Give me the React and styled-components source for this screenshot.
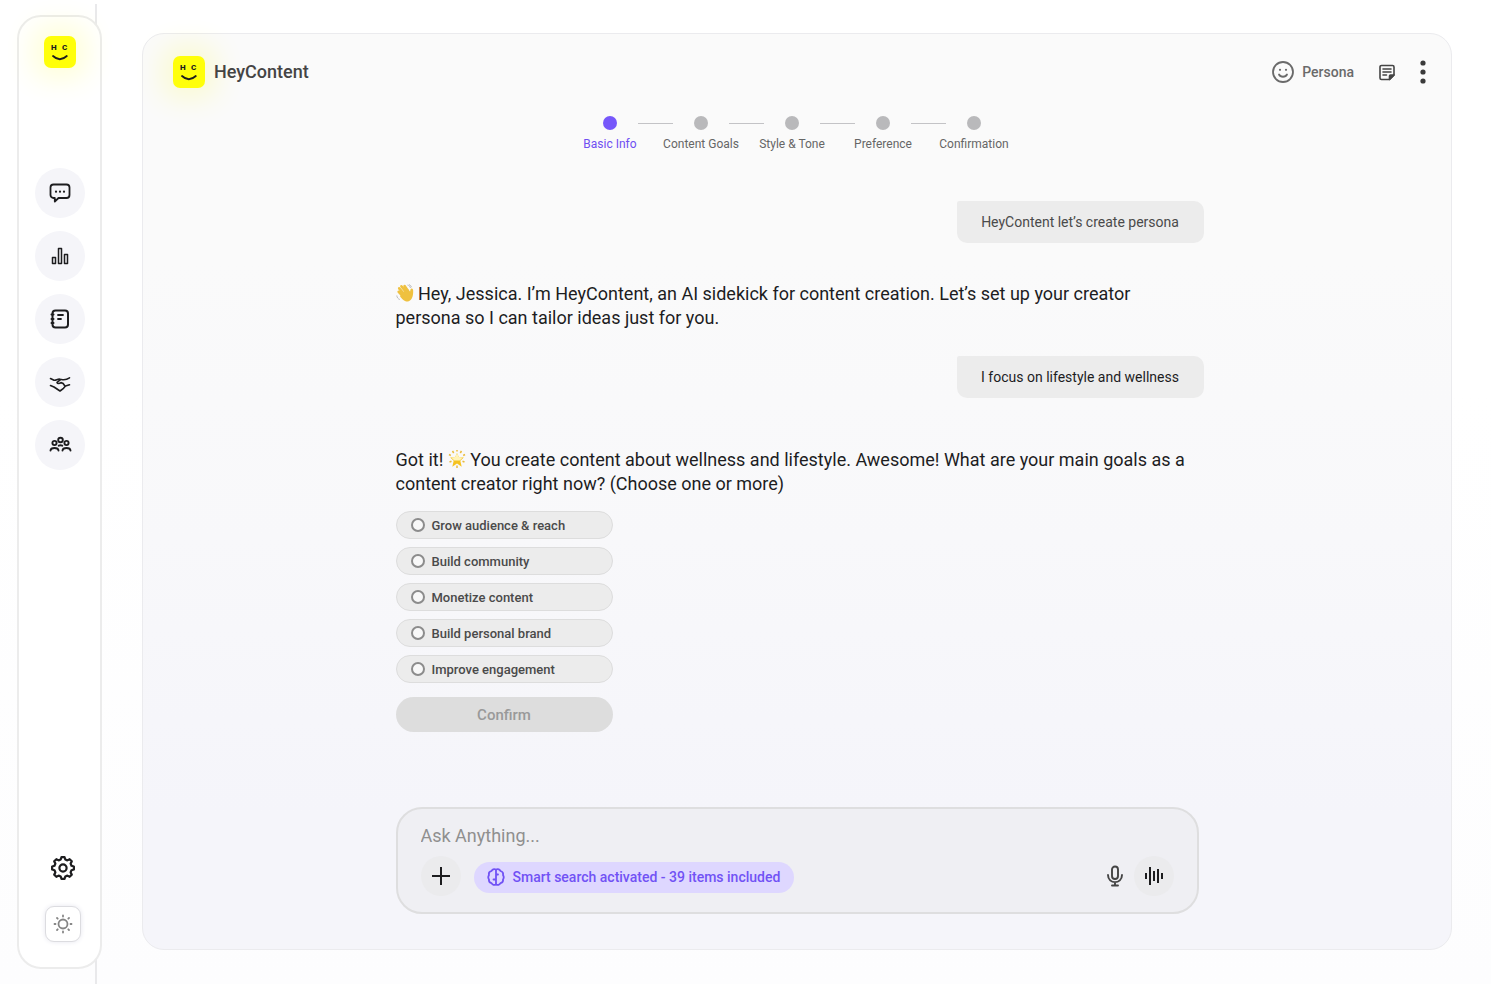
import React, { useState } from "react";
import styled, { createGlobalStyle } from "styled-components";

//........Global style...............
const GlobalStyle = createGlobalStyle`
  * {
    box-sizing: border-box;
  }
  body {
    margin: 0;
    background: #ffffff;
    font-family: Roboto, "Liberation Sans", sans-serif;
    color: #1d1d1f;
  }
  button, input {
    font-family: inherit;
  }
  button {
    border: 0;
    padding: 0;
    background: none;
    cursor: pointer;
  }
`;

//........Page...............
const Page = styled.div`
  position: relative;
  display: flex;
  gap: 40px;
  min-height: 100vh;
  padding: 15px 39px 15px 17px;
  background: linear-gradient(#ffffff 40%, #fdfdfe);

  &::before {
    content: "";
    position: absolute;
    left: 95px;
    top: 4px;
    bottom: 0;
    width: 2px;
    background: #e9e9eb;
  }
`;

//........Sidebar...............
const Sidebar = styled.aside`
  position: relative;
  flex: none;
  display: flex;
  flex-direction: column;
  align-items: center;
  width: 85px;
  padding: 19px 0 25px;
  border: 2px solid #ececec;
  border-radius: 24px;
  background: #ffffff;
`;
const Nav = styled.nav`
  display: flex;
  flex-direction: column;
  gap: 13px;
  margin: 100px 0 auto;
`;
const NavLink = styled.a`
  display: flex;
  align-items: center;
  justify-content: center;
  width: 50px;
  height: 50px;
  border-radius: 50%;
  background: #f5f5f9;
  color: #1d1d1f;
`;
const SidebarFooter = styled.div`
  display: flex;
  flex-direction: column;
  align-items: center;
  gap: 25px;
  padding-left: 6px;
`;
const IconButton = styled.button`
  display: flex;
  align-items: center;
  justify-content: center;
  width: ${(p) => p.$size}px;
  height: ${(p) => p.$size}px;
  color: ${(p) => p.$color || "#1d1d1f"};
`;
const ThemeButton = styled(IconButton)`
  border: 1px solid #dcdce0;
  border-radius: 9px;
  background: #ffffff;
  box-shadow: 0 0 5px #e6e6ee;
`;
const LogoTile = styled.svg`
  display: block;
  flex: none;
  width: 32px;
  height: 32px;
  border-radius: 7px;
  background: #ffff0a;
  box-shadow: 0 0 26px 12px rgba(255, 255, 60, 0.18);
`;

//........Panel...............
const Panel = styled.main`
  flex: 1;
  display: flex;
  flex-direction: column;
  margin: 18px 0 19px;
  padding: 22px 0 35px;
  border: 1px solid #ebebee;
  border-radius: 22px;
  background: linear-gradient(#fafafa 25%, #f8f8fa 55%, #f5f5fa 85%);
`;
const Header = styled.header`
  display: flex;
  align-items: center;
  height: 32px;
  padding: 0 16px 0 30px;
`;
const Title = styled.h1`
  margin: 0 auto 0 9px;
  font-size: 18px;
  font-weight: 500;
  line-height: 24px;
  color: #444444;
`;
const PersonaButton = styled.button`
  display: flex;
  align-items: center;
  gap: 7px;
  font-size: 14px;
  font-weight: 500;
  color: #6a6a6a;
`;
const HeaderActions = styled.div`
  display: flex;
  align-items: center;
  gap: 14px;
  margin-left: 23px;
`;

//........Steps...............
const Steps = styled.ol`
  display: grid;
  grid-template-columns: repeat(5, 91px);
  justify-content: center;
  margin: 28px 0 0;
  padding: 0 10px 0 0;
  list-style: none;
`;
const Step = styled.li`
  text-align: center;
  font-size: 12px;
  line-height: 16px;
  color: ${(p) => (p.$active ? "#6f4ff2" : "#666666")};
`;
const StepMarker = styled.div`
  display: grid;
  grid-template-columns: minmax(0, 1fr) 14px minmax(0, 1fr);
  align-items: center;
  margin-bottom: 6px;
`;
const StepDot = styled.span`
  grid-column: 2;
  height: 14px;
  border-radius: 50%;
  background: ${(p) => (p.$active ? "#7657fa" : "#b9b9bb")};
`;
const StepLine = styled.span`
  width: 35px;
  height: 1px;
  margin-left: 21px;
  background: #c3c3c6;
`;

//........Conversation...............
const Column = styled.div`
  flex: 1;
  display: flex;
  flex-direction: column;
  width: 100%;
  max-width: 813px;
  margin: 49px auto 0;
  padding-left: 5px;
`;
const Bubble = styled.p`
  align-self: flex-end;
  width: 247px;
  margin: 0;
  padding: 11px 0;
  border-radius: 2px 10px 10px 10px;
  background: #ececec;
  text-align: center;
  font-size: 14px;
  line-height: 20px;
  color: ${(p) => (p.$muted ? "#4a4a4a" : "#1d1d1f")};
`;
const Message = styled.p`
  max-width: 796px;
  margin: ${(p) => p.$top}px 0 ${(p) => p.$bottom}px;
  font-size: 18px;
  line-height: 24px;
`;
const Emoji = styled.svg`
  width: 18px;
  height: 18px;
  vertical-align: -2px;
`;
const Options = styled.fieldset`
  display: flex;
  flex-direction: column;
  gap: 8px;
  width: 217px;
  margin: 0 0 14px;
  padding: 0;
  border: 0;
`;
const Option = styled.label`
  display: flex;
  align-items: center;
  gap: 7px;
  height: 28px;
  padding: 0 14px;
  border: 1px solid #dddddd;
  border-radius: 14px;
  background: #ececec;
  font-size: 13px;
  font-weight: 500;
  color: #4a4a4a;
`;
const OptionBox = styled.input`
  appearance: none;
  width: 14px;
  height: 14px;
  margin: 0;
  border: 2px solid #8c8c8c;
  border-radius: 50%;
  background: #f8f8f8;

  &:checked {
    border-color: #7657fa;
    background: #7657fa;
  }
`;
const ConfirmButton = styled.button`
  width: 217px;
  height: 35px;
  border-radius: 18px;
  background: ${(p) => (p.disabled ? "#dddddd" : "#7657fa")};
  font-size: 15px;
  font-weight: 500;
  color: ${(p) => (p.disabled ? "#999999" : "#ffffff")};
`;

//........Composer...............
const Composer = styled.form`
  margin: auto 5px 0 0;
  padding: 14px 23px 16px;
  border: 2px solid #dededf;
  border-radius: 26px;
  background: #efeff3;
`;
const Prompt = styled.input`
  display: block;
  width: 100%;
  height: 24px;
  margin-bottom: 9px;
  padding: 0;
  border: 0;
  outline: 0;
  background: none;
  font-size: 18px;

  &::placeholder {
    color: #8f8f8f;
    opacity: 1;
  }
`;
const ComposerRow = styled.div`
  display: flex;
  align-items: center;
`;
const RoundButton = styled(IconButton)`
  border-radius: 50%;
  background: #ebebed;
`;
const SmartChip = styled.button`
  display: flex;
  align-items: center;
  gap: 8px;
  height: 31px;
  margin: 2px auto 0 13px;
  padding: 0 14px 0 13px;
  border-radius: 16px;
  background: #ded7ff;
  font-size: 14px;
  font-weight: 500;
  color: #7152f5;
`;

//........Icons...............
const Line = ({ size = 24, width = 2, children }) => (
  <svg
    width={size}
    height={size}
    viewBox={`0 0 ${size} ${size}`}
    fill="none"
    stroke="currentColor"
    strokeWidth={width}
    strokeLinecap="round"
    strokeLinejoin="round"
    aria-hidden="true"
  >
    {children}
  </svg>
);

const Logo = () => (
  <LogoTile viewBox="0 0 32 32" role="img" aria-label="HeyContent logo">
    <g fontFamily="Roboto, sans-serif" fontSize="8" fontWeight="900" fill="#1d1d1f">
      <text x="7" y="14">H</text>
      <text x="18" y="14">C</text>
    </g>
    <path d="M9 20q6.800 6.500 13.800 0" fill="none" stroke="#1d1d1f" strokeWidth="1.800" strokeLinecap="round" />
  </LogoTile>
);

const ChatIcon = () => (
  <Line width={1.8}>
    <path d="M5.500 3.500h13a3 3 0 0 1 3 3v7.500a3 3 0 0 1-3 3h-8L6.800 20.600V17H5.500a3 3 0 0 1-3-3V6.500a3 3 0 0 1 3-3z" />
    <path d="M8 10.700h.01M12 10.700h.01M16 10.700h.01" strokeWidth="2.200" />
  </Line>
);
const BarsIcon = () => (
  <Line width={1.5}>
    <path d="M4.500 13.500h3v6h-3zM10.500 4.500h3v15h-3zM16.500 10.500h3v9h-3z" />
  </Line>
);
const NotebookIcon = () => (
  <Line>
    <rect x="4.500" y="3.500" width="15.500" height="17" rx="3" />
    <path d="M3.500 7.500h2M3.500 12h2M3.500 16h2" />
    <path d="M10 8h5M10 12h3" strokeWidth="1.800" />
  </Line>
);
const HandshakeIcon = () => (
  <Line width={1.6}>
    <path d="M2.500 8.500 6 10.200c2 .5 3.500-1.500 6-1 2.500.3 5 1.800 9.500-1.400" />
    <path d="M12.500 9.600 9 12.300c.3 1.700 2.500 1.500 4 .3 1.800.2 3 1.500 3.800 3.200" />
    <path d="M2.500 15.500 6 17l6 4 3.500-2.700 2-2.300 4-1.200" />
  </Line>
);
const GroupIcon = () => (
  <Line width={1.9}>
    <circle cx="12.500" cy="7" r="2.300" />
    <circle cx="6.500" cy="10" r="2.100" />
    <circle cx="18.500" cy="10" r="2.100" />
    <path d="M2.500 17.500c.3-3.400 7.700-3.400 8 0M14.500 17.500c.3-3.400 7.700-3.400 8 0M10.700 12.700q1.800-.8 3.600 0" />
  </Line>
);

// eight teeth, each one given by its two foot and two top points
const gearPoints = Array.from({ length: 8 }, (_, i) =>
  [[-15, 8.8], [-8, 11], [8, 11], [15, 8.8]].map(([shift, radius]) => {
    const angle = ((i * 45 + shift) * Math.PI) / 180;
    return `${13 + radius * Math.cos(angle)},${13 + radius * Math.sin(angle)}`;
  }).join(" ")
).join(" ");

const GearIcon = () => (
  <Line size={26} width={2.2}>
    <polygon points={gearPoints} />
    <circle cx="13" cy="13" r="3.600" />
  </Line>
);
const SunIcon = () => (
  <Line size={20} width={1.8}>
    <circle cx="10" cy="10" r="4.500" />
    <path d="M10 1.500v1M10 17.500v1M1.500 10h1M17.500 10h1M4 4l.7.7M15.300 15.300l.7.7M4 16l.7-.7M15.300 4.700l.7-.7" />
  </Line>
);
const SmileIcon = () => (
  <Line width={1.8}>
    <circle cx="12" cy="12" r="10" />
    <path d="M8 14.500c1.500 3 6.500 3 8 0" />
    <path d="M9 9.800h.01M15 9.800h.01" strokeWidth="2.200" />
  </Line>
);
const NoteIcon = () => (
  <Line size={20} width={1.6}>
    <path d="M12.500 17.500h-8a1.500 1.500 0 0 1-1.500-1.500V5a1.500 1.500 0 0 1 1.500-1.500H15.500A1.500 1.500 0 0 1 17 5v8z" />
    <path d="M12.500 17.500V14a1 1 0 0 1 1-1H17z" fill="currentColor" />
    <path d="M6 7h8M6 10h8M6 13h3.500" />
  </Line>
);
const MoreIcon = () => (
  <svg width="8" height="24" viewBox="0 0 8 24" fill="currentColor" aria-hidden="true">
    <circle cx="4" cy="3" r="2.600" />
    <circle cx="4" cy="12" r="2.600" />
    <circle cx="4" cy="21" r="2.600" />
  </svg>
);
const PlusIcon = () => (
  <svg width="20" height="20" viewBox="0 0 20 20" aria-hidden="true">
    <path d="M10 1v18M1 10h18" stroke="currentColor" strokeWidth="2" />
  </svg>
);
const BrainIcon = () => (
  <Line size={18} width={1.8}>
    <path d="M9 1.500C7 .5 5 1.500 4.500 3 2.500 3.500 1.500 5 2 7c-1 1.500-1 3 0 4.500-.3 2 .8 3.300 2.500 3.600C5.300 16.800 7.500 17.400 9 16.500c1.500.9 3.700.3 4.500-1.400 1.700-.3 2.800-1.600 2.500-3.600 1-1.500 1-3 0-4.500.5-2-.5-3.500-2.500-4C13 1.500 11 .5 9 1.500z" />
    <path d="M9 2v14M9 6.500h2M6.500 11.500H9" />
  </Line>
);
const MicIcon = () => (
  <Line width={1.9}>
    <rect x="9" y="2.500" width="6" height="12.500" rx="3" />
    <path d="M5 11c0 9.500 14 9.500 14 0M12 18.500V21M9 21.500h6" />
  </Line>
);
const WaveIcon = () => (
  <svg width="20" height="20" viewBox="0 0 20 20" aria-hidden="true">
    <path d="M2 7v6M6 1v18M10 5v10M14 3v14M18 7v6" stroke="currentColor" strokeWidth="2" />
  </svg>
);

const WaveEmoji = () => (
  <Emoji viewBox="0 0 18 18" role="img" aria-label="Waving hand">
    <path d="M3.200 4.300 8.800 11M5.400 2.300l5.500 7M8.600 2l4 6M2.700 7.800l5 5.200" stroke="#efc13f" strokeWidth="2.600" strokeLinecap="round" />
    <path d="M5.500 9.500 12 4.800c1 2 1.500 2.500 2 3.200.3-2 .6-3.700 1.800-3.500 1.700.3 1.500 2.500 1.300 5-.3 3.500-1.800 7.500-5.500 8-3 .3-6-3-7.500-5z" fill="#efc13f" />
    <path d="M.8 11.500c.2 2 1.200 3.400 3 4M11.500 1c1.700.4 2.600 1.400 3 3M13 .6c1.400.5 2.200 1.400 2.600 2.600" fill="none" stroke="#b5b5b5" strokeWidth=".9" />
  </Emoji>
);
const StarEmoji = () => (
  <Emoji viewBox="0 0 18 18" role="img" aria-label="Glowing star">
    <path d="m9 3 1.800 4 5 .4-3.500 3.300 1.400 6L9 13.500l-4.700 3.200 1.400-6L2.200 7.400l5-.4z" fill="#f5c21f" />
    <path d="m9 3 1.800 4 4 .5-3 3H6.200l-3-3 4-.5z" fill="#fff3b8" />
    <path d="M9 0v1.600M4.500 1l1.200 2M13.500 1l-1.200 2M1 4.500l1.800 1M17 4.500l-1.800 1M9 15.500V18M1.500 12l2-.8M16.500 12l-2-.8" stroke="#eabb3b" strokeWidth="1.500" />
  </Emoji>
);

//........Data...............
const links = [
  { label: "Chat", icon: <ChatIcon /> },
  { label: "Analytics", icon: <BarsIcon /> },
  { label: "Notebook", icon: <NotebookIcon /> },
  { label: "Partnerships", icon: <HandshakeIcon /> },
  { label: "Community", icon: <GroupIcon /> },
];
const steps = ["Basic Info", "Content Goals", "Style & Tone", "Preference", "Confirmation"];
const goals = [
  "Grow audience & reach",
  "Build community",
  "Monetize content",
  "Build personal brand",
  "Improve engagement",
];

//.....JSX code...........................
function App() {
  const [selected, setSelected] = useState([]);
  const [prompt, setPrompt] = useState("");

  const toggleGoal = (goal) => {
    setSelected(
      selected.includes(goal)
        ? selected.filter((item) => item !== goal)
        : [...selected, goal]
    );
  };

  return (
    <>
      <GlobalStyle />
      <Page>
        <Sidebar>
          <Logo />
          <Nav aria-label="Main">
            {links.map((link) => (
              <NavLink key={link.label} href="#" aria-label={link.label}>
                {link.icon}
              </NavLink>
            ))}
          </Nav>
          <SidebarFooter>
            <IconButton $size={26} aria-label="Settings">
              <GearIcon />
            </IconButton>
            <ThemeButton $size={36} $color="#858585" aria-label="Light theme">
              <SunIcon />
            </ThemeButton>
          </SidebarFooter>
        </Sidebar>

        <Panel>
          <Header>
            <Logo />
            <Title>HeyContent</Title>
            <PersonaButton>
              <SmileIcon />
              Persona
            </PersonaButton>
            <HeaderActions>
              <IconButton $size={20} $color="#444444" aria-label="Notes">
                <NoteIcon />
              </IconButton>
              <IconButton $size={24} $color="#3a3a3a" aria-label="More">
                <MoreIcon />
              </IconButton>
            </HeaderActions>
          </Header>

          <Steps>
            {steps.map((step, index) => (
              <Step key={step} $active={index === 0}>
                <StepMarker>
                  <StepDot $active={index === 0} />
                  {index < steps.length - 1 && <StepLine />}
                </StepMarker>
                {step}
              </Step>
            ))}
          </Steps>

          <Column>
            <Bubble $muted>HeyContent let’s create persona</Bubble>
            <Message $top={39} $bottom={26}>
              <WaveEmoji /> Hey, Jessica. I’m HeyContent, an AI sidekick for content
              creation. Let’s set up your creator persona so I can tailor ideas just
              for you.
            </Message>
            <Bubble>I focus on lifestyle and wellness</Bubble>
            <Message $top={50} $bottom={15}>
              Got it! <StarEmoji /> You create content about wellness and lifestyle.
              Awesome! What are your main goals as a content creator right now? (Choose
              one or more)
            </Message>
            <Options aria-label="Main goals">
              {goals.map((goal) => (
                <Option key={goal}>
                  <OptionBox
                    type="checkbox"
                    checked={selected.includes(goal)}
                    onChange={() => toggleGoal(goal)}
                  />
                  {goal}
                </Option>
              ))}
            </Options>
            <ConfirmButton disabled={selected.length === 0}>Confirm</ConfirmButton>

            <Composer onSubmit={(e) => e.preventDefault()}>
              <Prompt
                aria-label="Message"
                placeholder="Ask Anything..."
                value={prompt}
                onChange={(e) => setPrompt(e.target.value)}
              />
              <ComposerRow>
                <RoundButton type="button" $size={40} aria-label="Add">
                  <PlusIcon />
                </RoundButton>
                <SmartChip type="button">
                  <BrainIcon />
                  Smart search activated - 39 items included
                </SmartChip>
                <IconButton type="button" $size={38} $color="#444444" aria-label="Dictate">
                  <MicIcon />
                </IconButton>
                <RoundButton type="button" $size={40} aria-label="Voice mode">
                  <WaveIcon />
                </RoundButton>
              </ComposerRow>
            </Composer>
          </Column>
        </Panel>
      </Page>
    </>
  );
}

export default App;
